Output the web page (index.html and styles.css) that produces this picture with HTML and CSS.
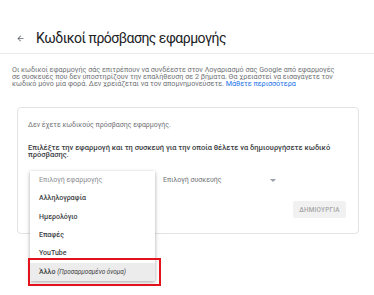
FILE: index.html
```html
<!DOCTYPE html>
<html lang="el">
<head>
<meta charset="utf-8">
<link rel="stylesheet" href="styles.css">
</head>
<body>
<header class="topbar">
  <svg class="back" width="9" height="9" viewBox="0 0 24 24"><path d="M20 11H7.83l5.59-5.59L12 4l-8 8 8 8 1.41-1.41L7.83 13H20v-2z" fill="#5f6368"/></svg>
  <h1 class="title">Κωδικοί πρόσβασης εφαρμογής</h1>
</header>
<p class="intro">Οι κωδικοί εφαρμογής σάς επιτρέπουν να συνδέεστε στον Λογαριασμό σας Google από εφαρμογές σε συσκευές που δεν υποστηρίζουν την επαλήθευση σε 2 βήματα. Θα χρειαστεί να εισαγάγετε τον κωδικό μόνο μία φορά. Δεν χρειάζεται να τον απομνημονεύσετε. <a class="link" href="#">Μάθετε περισσότερα</a></p>
<section class="card">
  <p class="empty">Δεν έχετε κωδικούς πρόσβασης εφαρμογής.</p>
  <p class="prompt">Επιλέξτε την εφαρμογή και τη συσκευή για την οποία θέλετε να δημιουργήσετε κωδικό πρόσβασης.</p>
  <div class="selects">
    <div class="app-select">
      <ul class="menu">
        <li class="item placeholder">Επιλογή εφαρμογής</li>
        <li class="item">Αλληλογραφία</li>
        <li class="item">Ημερολόγιο</li>
        <li class="item">Επαφές</li>
        <li class="item">YouTube</li>
        <li class="item active">Άλλο <em>(Προσαρμοσμένο όνομα)</em><span class="mark"></span></li>
      </ul>
    </div>
    <div class="device-select">
      <span class="device-label">Επιλογή συσκευής</span>
      <span class="caret"></span>
    </div>
  </div>
  <div class="actions">
    <button class="create">ΔΗΜΙΟΥΡΓΙΑ</button>
  </div>
</section>
</body>
</html>
```
FILE: styles.css
```css
* { box-sizing: border-box; }
html, body { margin: 0; padding: 0; background: #fff; }
body {
  font-family: Roboto, "Noto Sans", "DejaVu Sans", sans-serif;
  width: 374px;
  height: 295px;
  overflow: hidden;
  position: relative;
}
.topbar {
  display: flex;
  align-items: center;
  height: 54px;
  padding: 23px 0 0 16px;
  border-bottom: 1px solid #ececec;
}
.back { display: block; margin-right: 11px; }
.title {
  margin: 0;
  font-weight: 400;
  font-size: 14px;
  line-height: 20px;
  letter-spacing: -0.5px;
  color: #202124;
}
.intro {
  margin: 11.5px 0 0 12px;
  width: 328px;
  font-size: 7.2px;
  line-height: 7.2px;
  color: #6f7276;
}
.link { color: #1a73e8; text-decoration: none; }
.card {
  margin: 20px 0 0 17px;
  width: 342px;
  height: 127px;
  border: 1px solid #e2e3e5;
  border-radius: 4px;
  padding: 14px 12px 0 10px;
}
.empty {
  margin: 0;
  font-size: 7px;
  line-height: 7px;
  color: #6f7276;
}
.prompt {
  margin: 14.5px 0 0;
  width: 316px;
  font-size: 7.5px;
  line-height: 7px;
  font-weight: 500;
  color: #3c4043;
}
.selects {
  display: flex;
  align-items: center;
  margin: 13.5px 0 0 2px;
  height: 18.3px;
}
.app-select {
  position: relative;
  width: 125px;
  height: 18.3px;
  flex: none;
}
.menu {
  position: absolute;
  left: 0;
  top: 0;
  width: 125px;
  margin: 0;
  padding: 0;
  list-style: none;
  background: #fff;
  box-shadow: 0 1px 3px rgba(0,0,0,0.25), 0 2px 6px rgba(0,0,0,0.12);
  z-index: 2;
}
.item {
  position: relative;
  height: 18.3px;
  line-height: 18.3px;
  padding-left: 9px;
  font-size: 7px;
  font-weight: 500;
  color: #3c4043;
  white-space: nowrap;
}
.item.placeholder { font-weight: 400; color: #8a8d91; }
.item.active { background: #ececec; }
.item em { font-style: italic; font-weight: 400; font-size: 6.4px; }
.mark {
  position: absolute;
  left: -2.5px;
  right: -6px;
  top: -5px;
  bottom: -5.5px;
  border: 2.5px solid #e3131b;
}
.device-select {
  display: flex;
  align-items: center;
  margin-left: 8px;
  width: 116px;
}
.device-label {
  flex: 1;
  font-size: 7px;
  color: #6f7276;
}
.caret {
  width: 0;
  height: 0;
  border-left: 3px solid transparent;
  border-right: 3px solid transparent;
  border-top: 3px solid #9aa0a6;
  margin-right: 3px;
}
.actions {
  display: flex;
  justify-content: flex-end;
  margin-top: 11.7px;
}
.create {
  height: 17px;
  width: 53px;
  padding: 0;
  border: none;
  border-radius: 2px;
  background: #f1f1f1;
  color: #a6a6a6;
  font-family: Roboto, sans-serif;
  font-size: 6.4px;
  font-weight: 500;
  letter-spacing: 0.2px;
}
```
